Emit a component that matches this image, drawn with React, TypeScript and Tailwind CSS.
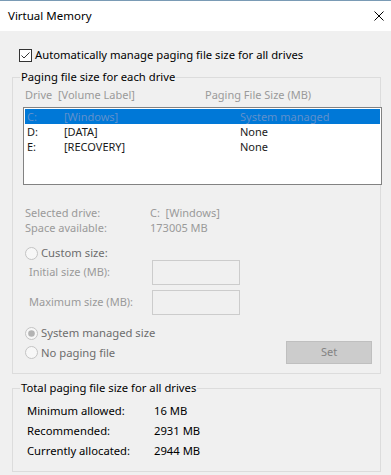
import React from "react";

const Radio = ({ checked = false }: { checked?: boolean }) => (
  <svg width="13" height="13" viewBox="0 0 13 13" className="shrink-0">
    <circle cx="6.5" cy="6.5" r="6" fill="#f7f7f7" stroke="#c3c3c3" strokeWidth="1" />
    {checked && <circle cx="6.5" cy="6.5" r="3.3" fill="#b3b3b3" />}
  </svg>
);

export default function App() {
  return (
    <div className="w-[391px] h-[475px] overflow-hidden bg-[#f0f0f0] text-[11px] text-black font-['Noto_Sans',sans-serif]">
      {/* Title bar */}
      <div className="h-[31px] bg-white border-t border-[#7a9bb5] flex items-center justify-between pl-[8px] pr-[7px]">
        <span className="text-[11.5px] leading-[16px] text-black">Virtual Memory</span>
        <svg width="10" height="10" viewBox="0 0 10 10">
          <path d="M0.5 0.5 L9.5 9.5 M9.5 0.5 L0.5 9.5" stroke="#000" strokeWidth="1" />
        </svg>
      </div>

      {/* Auto manage checkbox */}
      <div className="mt-[16px] ml-[19px] h-[16px] flex items-center gap-[3px]">
        <svg width="13" height="13" viewBox="0 0 13 13" className="shrink-0">
          <rect x="0.5" y="0.5" width="12" height="12" fill="#fff" stroke="#333" strokeWidth="1" />
          <path d="M2.5 6.5 L5 9 L10.5 3.5" fill="none" stroke="#333" strokeWidth="1" />
        </svg>
        <span className="leading-[16px] text-[11.25px]">Automatically manage paging file size for all drives</span>
      </div>

      {/* Group 1 */}
      <fieldset className="mt-[6px] ml-[12px] w-[369px] min-w-0 border border-[#dcdcdc] pb-[9px]">
        <legend className="ml-[7px] px-[1px] leading-[16px] text-[11.25px]">Paging file size for each drive</legend>

        <div className="mt-[2px] h-[15px] leading-[15px] pl-[12px] flex text-[#9a9a9a]">
          <span className="w-[180px]">Drive&nbsp;&nbsp;[Volume Label]</span>
          <span>Paging File Size (MB)</span>
        </div>

        <div className="mt-[5px] ml-[10px] w-[359px] h-[78px] border border-[#828282] bg-white p-[1px]">
          <div className="h-[15px] leading-[15px] flex bg-[#0078d7] text-[#5f90cc]">
            <span className="w-[39px] pl-[2px]">C:</span>
            <span className="w-[176px]">[Windows]</span>
            <span>System managed</span>
          </div>
          <div className="h-[15px] leading-[15px] flex text-[#1a1a1a]">
            <span className="w-[39px] pl-[2px]">D:</span>
            <span className="w-[176px]">[DATA]</span>
            <span>None</span>
          </div>
          <div className="h-[15px] leading-[15px] flex text-[#1a1a1a]">
            <span className="w-[39px] pl-[2px]">E:</span>
            <span className="w-[176px]">[RECOVERY]</span>
            <span>None</span>
          </div>
        </div>

        <div className="mt-[20px] pl-[12px] text-[#9a9a9a]">
          <div className="h-[15px] leading-[15px] flex">
            <span className="w-[125px]">Selected drive:</span>
            <span>C:&nbsp;&nbsp;[Windows]</span>
          </div>
          <div className="h-[15px] leading-[15px] flex">
            <span className="w-[125px]">Space available:</span>
            <span>173005 MB</span>
          </div>
        </div>

        <div className="mt-[11px] pl-[12px] h-[14px] flex items-center gap-[3px] text-[#6d6d6d]">
          <Radio />
          <span className="leading-[14px] text-[11.25px]">Custom size:</span>
        </div>

        <div className="h-[25px] flex items-center pl-[16px] text-[#9a9a9a]">
          <span className="w-[123px]">Initial size (MB):</span>
          <div className="w-[88px] h-[25px] border border-[#cccccc] bg-[#f0f0f0]" />
        </div>
        <div className="mt-[5px] h-[25px] flex items-center pl-[16px] text-[#9a9a9a]">
          <span className="w-[123px]">Maximum size (MB):</span>
          <div className="w-[88px] h-[25px] border border-[#cccccc] bg-[#f0f0f0]" />
        </div>

        <div className="mt-[10px] pl-[12px] h-[16px] flex items-center gap-[3px] text-[#6d6d6d]">
          <Radio checked />
          <span className="leading-[16px] text-[11.25px]">System managed size</span>
        </div>

        <div className="pl-[12px] pr-[8px] h-[23px] flex items-center">
          <div className="flex items-center gap-[3px] text-[#6d6d6d]">
            <Radio />
            <span className="leading-[16px] text-[11.25px]">No paging file</span>
          </div>
          <div className="ml-auto w-[86px] h-[23px] bg-[#cccccc] border border-[#bfbfbf] flex items-center justify-center text-[#838383]">
            Set
          </div>
        </div>
      </fieldset>

      {/* Group 2 */}
      <fieldset className="mt-[6px] ml-[12px] w-[369px] min-w-0 border border-[#dcdcdc] pb-[10px]">
        <legend className="ml-[7px] px-[1px] leading-[16px] text-[11.25px]">Total paging file size for all drives</legend>
        <div className="mt-[5px] pl-[14px] text-[11.25px]">
          <div className="h-[20px] leading-[20px] flex">
            <span className="w-[127px]">Minimum allowed:</span>
            <span>16 MB</span>
          </div>
          <div className="h-[20px] leading-[20px] flex">
            <span className="w-[127px]">Recommended:</span>
            <span>2931 MB</span>
          </div>
          <div className="h-[20px] leading-[20px] flex">
            <span className="w-[127px]">Currently allocated:</span>
            <span>2944 MB</span>
          </div>
        </div>
      </fieldset>
    </div>
  );
}
